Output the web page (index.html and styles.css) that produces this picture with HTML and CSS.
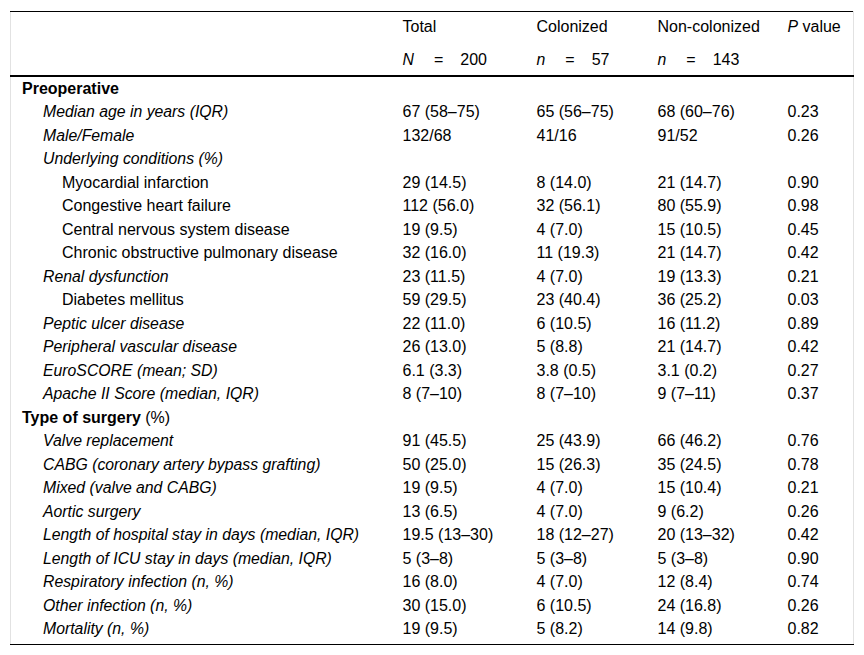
FILE: index.html
```html
<!DOCTYPE html>
<html>
<head>
<meta charset="utf-8">
<link rel="stylesheet" href="styles.css">
</head>
<body>
<div class="wrap">
<table class="tbl">
<colgroup>
<col class="c0"><col class="c1"><col class="c2"><col class="c3"><col class="c4">
</colgroup>
<thead>
<tr class="h1"><td></td><td>Total</td><td>Colonized</td><td>Non-colonized</td><td><i>P</i> value</td></tr>
<tr class="h2"><td></td>
<td><i>N</i><span class="eq">=</span>200</td>
<td><i>n</i><span class="eq">=</span>57</td>
<td><i>n</i><span class="eq">=</span>143</td>
<td></td></tr>
</thead>
<tbody>
<tr><td class="l0"><b>Preoperative</b></td><td></td><td></td><td></td><td></td></tr>
<tr><td class="l1"><i>Median age in years (IQR)</i></td><td>67 (58–75)</td><td>65 (56–75)</td><td>68 (60–76)</td><td>0.23</td></tr>
<tr><td class="l1"><i>Male/Female</i></td><td>132/68</td><td>41/16</td><td>91/52</td><td>0.26</td></tr>
<tr><td class="l1"><i>Underlying conditions (%)</i></td><td></td><td></td><td></td><td></td></tr>
<tr><td class="l2">Myocardial infarction</td><td>29 (14.5)</td><td>8 (14.0)</td><td>21 (14.7)</td><td>0.90</td></tr>
<tr><td class="l2">Congestive heart failure</td><td>112 (56.0)</td><td>32 (56.1)</td><td>80 (55.9)</td><td>0.98</td></tr>
<tr><td class="l2">Central nervous system disease</td><td>19 (9.5)</td><td>4 (7.0)</td><td>15 (10.5)</td><td>0.45</td></tr>
<tr><td class="l2">Chronic obstructive pulmonary disease</td><td>32 (16.0)</td><td>11 (19.3)</td><td>21 (14.7)</td><td>0.42</td></tr>
<tr><td class="l1"><i>Renal dysfunction</i></td><td>23 (11.5)</td><td>4 (7.0)</td><td>19 (13.3)</td><td>0.21</td></tr>
<tr><td class="l2">Diabetes mellitus</td><td>59 (29.5)</td><td>23 (40.4)</td><td>36 (25.2)</td><td>0.03</td></tr>
<tr><td class="l1"><i>Peptic ulcer disease</i></td><td>22 (11.0)</td><td>6 (10.5)</td><td>16 (11.2)</td><td>0.89</td></tr>
<tr><td class="l1"><i>Peripheral vascular disease</i></td><td>26 (13.0)</td><td>5 (8.8)</td><td>21 (14.7)</td><td>0.42</td></tr>
<tr><td class="l1"><i>EuroSCORE (mean; SD)</i></td><td>6.1 (3.3)</td><td>3.8 (0.5)</td><td>3.1 (0.2)</td><td>0.27</td></tr>
<tr><td class="l1"><i>Apache II Score (median, IQR)</i></td><td>8 (7–10)</td><td>8 (7–10)</td><td>9 (7–11)</td><td>0.37</td></tr>
<tr><td class="l0"><b>Type of surgery</b> (%)</td><td></td><td></td><td></td><td></td></tr>
<tr><td class="l1"><i>Valve replacement</i></td><td>91 (45.5)</td><td>25 (43.9)</td><td>66 (46.2)</td><td>0.76</td></tr>
<tr><td class="l1"><i>CABG (coronary artery bypass grafting)</i></td><td>50 (25.0)</td><td>15 (26.3)</td><td>35 (24.5)</td><td>0.78</td></tr>
<tr><td class="l1"><i>Mixed (valve and CABG)</i></td><td>19 (9.5)</td><td>4 (7.0)</td><td>15 (10.4)</td><td>0.21</td></tr>
<tr><td class="l1"><i>Aortic surgery</i></td><td>13 (6.5)</td><td>4 (7.0)</td><td>9 (6.2)</td><td>0.26</td></tr>
<tr><td class="l1"><i>Length of hospital stay in days (median, IQR)</i></td><td>19.5 (13–30)</td><td>18 (12–27)</td><td>20 (13–32)</td><td>0.42</td></tr>
<tr><td class="l1"><i>Length of ICU stay in days (median, IQR)</i></td><td>5 (3–8)</td><td>5 (3–8)</td><td>5 (3–8)</td><td>0.90</td></tr>
<tr><td class="l1"><i>Respiratory infection (n, %)</i></td><td>16 (8.0)</td><td>4 (7.0)</td><td>12 (8.4)</td><td>0.74</td></tr>
<tr><td class="l1"><i>Other infection (n, %)</i></td><td>30 (15.0)</td><td>6 (10.5)</td><td>24 (16.8)</td><td>0.26</td></tr>
<tr class="last"><td class="l1"><i>Mortality (n, %)</i></td><td>19 (9.5)</td><td>5 (8.2)</td><td>14 (9.8)</td><td>0.82</td></tr>
</tbody>
</table>
</div>
</body>
</html>
```

FILE: styles.css
```css
html, body {
  margin: 0;
  padding: 0;
  background: #fff;
}
body {
  font-family: "Liberation Sans", Arial, sans-serif;
  font-size: 16px;
  color: #000;
}
.wrap {
  padding: 11px 0 0 10px;
}
.tbl {
  width: 843px;
  border-collapse: collapse;
  table-layout: fixed;
  border-left: 1px solid #e2e2e2;
  border-right: 1px solid #e2e2e2;
  border-top: 1px solid #000;
  border-bottom: 1px solid #000;
}
.c0 { width: 382px; }
.c1 { width: 134px; }
.c2 { width: 121px; }
.c3 { width: 130px; }
.c4 { width: 76px; }
.tbl td {
  padding: 0 0 0 10px;
  height: 23.48px;
  line-height: 23.48px;
  vertical-align: middle;
  white-space: nowrap;
}
.tbl td i {
  font-size: 15.8px;
}
.tbl .h1 td {
  height: 30px;
  line-height: 30px;
}
.tbl .h2 td {
  height: 31px;
  line-height: 31px;
  padding-top: 2px;
  border-bottom: 2px solid #000;
}
.eq {
  display: inline-block;
  margin: 0 17px 0 20px;
}
.tbl td.l0 { padding-left: 11px; }
.tbl td.l1 { padding-left: 32px; }
.tbl td.l2 { padding-left: 51px; }
.tbl .last td {
  padding-bottom: 3px;
  vertical-align: top;
}
```
